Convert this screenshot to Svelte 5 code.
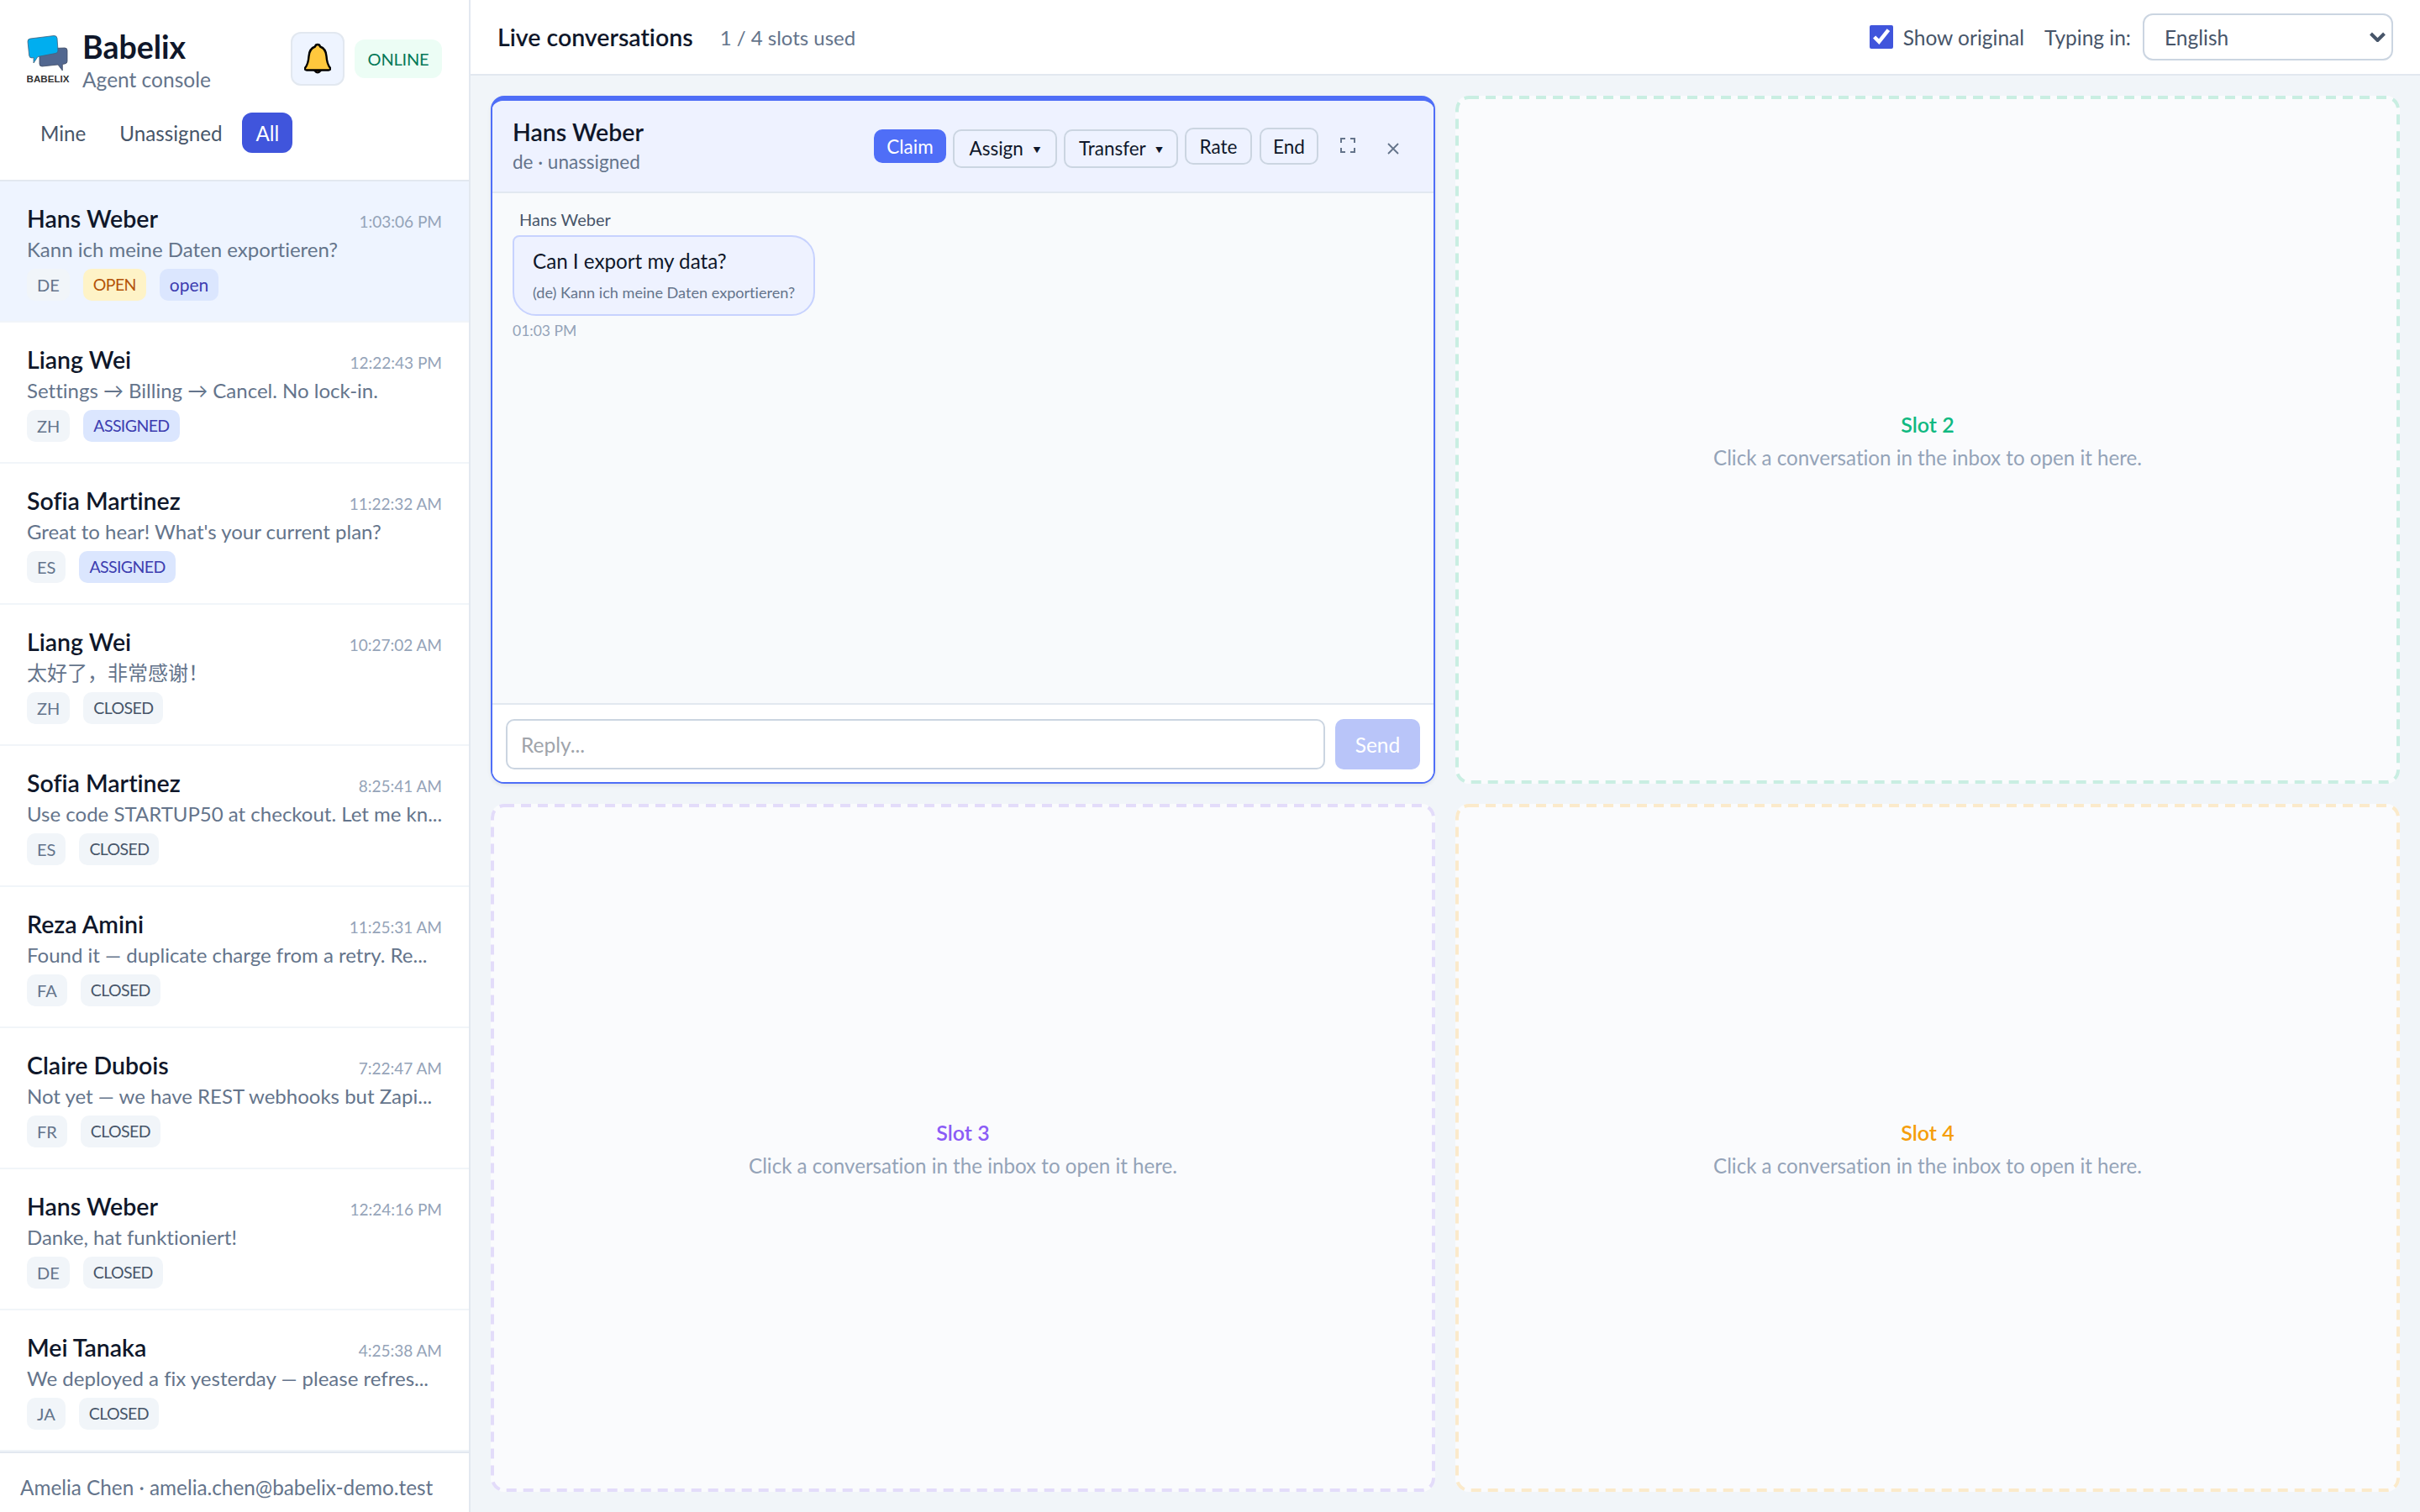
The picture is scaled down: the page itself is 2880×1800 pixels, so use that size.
<script>
  const items = [
    { name: 'Hans Weber', time: '1:03:06 PM', text: 'Kann ich meine Daten exportieren?', lang: 'DE', status: 'OPEN', extra: 'open', active: true },
    { name: 'Liang Wei', time: '12:22:43 PM', text: 'Settings → Billing → Cancel. No lock-in.', lang: 'ZH', status: 'ASSIGNED' },
    { name: 'Sofia Martinez', time: '11:22:32 AM', text: "Great to hear! What's your current plan?", lang: 'ES', status: 'ASSIGNED' },
    { name: 'Liang Wei', time: '10:27:02 AM', text: '太好了，非常感谢！', lang: 'ZH', status: 'CLOSED' },
    { name: 'Sofia Martinez', time: '8:25:41 AM', text: 'Use code STARTUP50 at checkout. Let me kn...', lang: 'ES', status: 'CLOSED' },
    { name: 'Reza Amini', time: '11:25:31 AM', text: 'Found it — duplicate charge from a retry. Re...', lang: 'FA', status: 'CLOSED' },
    { name: 'Claire Dubois', time: '7:22:47 AM', text: 'Not yet — we have REST webhooks but Zapi...', lang: 'FR', status: 'CLOSED' },
    { name: 'Hans Weber', time: '12:24:16 PM', text: 'Danke, hat funktioniert!', lang: 'DE', status: 'CLOSED' },
    { name: 'Mei Tanaka', time: '4:25:38 AM', text: 'We deployed a fix yesterday — please refres...', lang: 'JA', status: 'CLOSED' }
  ]

  const slots = [
    { label: 'Slot 2', tone: 'green' },
    { label: 'Slot 3', tone: 'purple' },
    { label: 'Slot 4', tone: 'amber' }
  ]

  let showOriginal = true
</script>

<div class="app">
  <aside class="sidebar">
    <div class="side-head">
      <div class="brand-row">
        <svg class="logo" viewBox="0 0 52 60" width="52" height="60" aria-hidden="true">
          <path d="M18 16 L45 15 Q48 15 48 18 L48 31 Q48 33.500 45 34 L42.300 34.500 L42.300 42 L37 35 L18 37 Q15 37 15 34 L15 19 Q15 16 18 16Z" fill="#52678f" stroke="#3d4a63" stroke-width="0.8" />
          <path d="M4 4 L32 0.500 Q35.500 0.200 36 3.500 L37 18 Q37.300 21 34 21.500 L13 25.500 L8 33 L8 26.500 L6 27 Q3 27.200 2.700 24 L1 7.500 Q0.800 4.400 4 4Z" fill="#00aeef" stroke="#45607a" stroke-width="0.8" />
          <text x="25" y="56" text-anchor="middle" class="logo-word">BABELIX</text>
        </svg>
        <div class="brand">
          <div class="brand-name">Babelix</div>
          <div class="brand-sub">Agent console</div>
        </div>
        <button class="bell" aria-label="Notifications">
          <svg viewBox="0 0 32 38" width="32" height="38" aria-hidden="true">
            <path d="M12 33 Q16 38 20 33Z" fill="#a9622a" stroke="#000" stroke-width="2" />
            <path d="M16 2 Q18.500 2 19 4.500 Q26 7 26.500 16 Q27 25 31 30 Q31.500 32.500 29 32.500 L3 32.500 Q0.500 32.500 1 30 Q5 25 5.500 16 Q6 7 13 4.500 Q13.500 2 16 2Z" fill="#ffc83d" stroke="#000" stroke-width="2.400" stroke-linejoin="round" />
          </svg>
        </button>
        <span class="online">ONLINE</span>
      </div>
      <div class="tabs">
        <button class="tab">Mine</button>
        <button class="tab">Unassigned</button>
        <button class="tab current">All</button>
      </div>
    </div>

    <div class="list">
      {#each items as item}
        <div class="item" class:active={item.active}>
          <div class="item-top">
            <span class="item-name">{item.name}</span>
            <span class="item-time">{item.time}</span>
          </div>
          <div class="item-text">{item.text}</div>
          <div class="tags">
            <span class="tag lang">{item.lang}</span>
            <span class="tag {item.status.toLowerCase()}">{item.status}</span>
            {#if item.extra}
              <span class="tag extra">{item.extra}</span>
            {/if}
          </div>
        </div>
      {/each}
    </div>

    <div class="side-foot">Amelia Chen · amelia.chen@babelix-demo.test</div>
  </aside>

  <main class="main">
    <header class="topbar">
      <h1>Live conversations</h1>
      <span class="used">1 / 4 slots used</span>
      <div class="top-right">
        <label class="check"><input type="checkbox" bind:checked={showOriginal} /> Show original</label>
        <span class="typing">Typing in:</span>
        <select class="lang-select">
          <option>English</option>
          <option>Deutsch</option>
        </select>
      </div>
    </header>

    <div class="grid">
      <section class="card">
        <div class="card-head">
          <div class="who">
            <div class="who-name">Hans Weber</div>
            <div class="who-sub">de · unassigned</div>
          </div>
          <div class="actions">
            <button class="btn primary">Claim</button>
            <button class="btn menu assign">Assign <i class="caret">▼</i></button>
            <button class="btn menu transfer">Transfer <i class="caret">▼</i></button>
            <button class="btn plain rate">Rate</button>
            <button class="btn plain end">End</button>
            <button class="icon-btn expand" aria-label="Expand">
              <svg viewBox="0 0 18 18" width="18" height="18" fill="none" stroke="#64748b" stroke-width="2"><path d="M1 6V1H6M12 1H17V6M17 12V17H12M6 17H1V12" /></svg>
            </button>
            <button class="icon-btn close" aria-label="Close">
              <svg viewBox="0 0 14 14" width="14" height="14" fill="none" stroke="#64748b" stroke-width="1.800"><path d="M1 1L13 13M13 1L1 13" /></svg>
            </button>
          </div>
        </div>

        <div class="messages">
          <div class="sender">Hans Weber</div>
          <div class="bubble">
            <div class="bubble-main">Can I export my data?</div>
            <div class="bubble-orig">(de) Kann ich meine Daten exportieren?</div>
          </div>
          <div class="stamp">01:03 PM</div>
        </div>

        <div class="composer">
          <input class="reply" placeholder="Reply..." />
          <button class="send" disabled>Send</button>
        </div>
      </section>

      {#each slots as slot}
        <section class="slot {slot.tone}">
          <svg class="dashes" width="1124" height="819" aria-hidden="true">
            <rect x="2" y="2" width="1120" height="815" rx="14" />
          </svg>
          <div class="slot-name">{slot.label}</div>
          <div class="slot-hint">Click a conversation in the inbox to open it here.</div>
        </section>
      {/each}
    </div>
  </main>
</div>

<style>
  :global(body) {
    margin: 0;
    background: #f1f5f9;
    font-family: Lato, "Noto Sans CJK SC", sans-serif;
    font-variant-ligatures: none;
    color: #0f172a;
  }
  button,
  input,
  select {
    font: inherit;
    font-variant-ligatures: none;
  }
  .app {
    display: grid;
    grid-template-columns: 560px 1fr;
    height: 1800px;
    overflow: hidden;
  }
  .sidebar {
    display: flex;
    flex-direction: column;
    background: #fff;
    border-right: 2px solid #e2e8f0;
    min-width: 0;
  }
  .side-head {
    height: 216px;
    box-sizing: border-box;
    padding: 38px 32px 0;
    border-bottom: 2px solid #e2e8f0;
  }
  .brand-row {
    display: flex;
    align-items: center;
    height: 64px;
  }
  .logo {
    flex: none;
    margin: 4px 14px 0 0;
  }
  .logo-word {
    font-family: "Liberation Sans", sans-serif;
    font-weight: 700;
    font-size: 11.6px;
    fill: #333;
  }
  .brand {
    flex: 1;
    min-width: 0;
    padding-top: 4px;
  }
  .brand-name {
    font-size: 37.5px;
    font-weight: 700;
    line-height: 45px;
  }
  .brand-sub {
    font-size: 24.5px;
    line-height: 34px;
    color: #64748b;
  }
  .bell {
    width: 64px;
    height: 64px;
    display: flex;
    align-items: center;
    justify-content: center;
    padding: 0;
    border: 2px solid #e2e8f0;
    border-radius: 12px;
    background: #eef4ff;
  }
  .online {
    margin-left: 12px;
    width: 104px;
    height: 46px;
    line-height: 46px;
    text-align: center;
    border-radius: 12px;
    background: #ecfdf5;
    color: #047857;
    font-size: 20px;
    letter-spacing: -0.2px;
  }
  .tabs {
    display: flex;
    gap: 8px;
    margin-top: 32px;
  }
  .tab {
    height: 48px;
    padding: 0 16px;
    border: 0;
    border-radius: 12px;
    background: transparent;
    color: #475569;
    font-size: 24.2px;
  }
  .tab.current {
    background: #4055dc;
    color: #fff;
  }
  .list {
    flex: 1;
    min-height: 0;
  }
  .item {
    height: 168px;
    box-sizing: border-box;
    padding: 24px 32px 0;
    border-bottom: 2px solid #f1f5f9;
  }
  .item.active {
    background: #eef4ff;
  }
  .item-top {
    display: flex;
    justify-content: space-between;
    align-items: baseline;
  }
  .item-name {
    font-size: 28.5px;
    font-weight: 600;
    line-height: 40px;
  }
  .item-time {
    font-size: 19px;
    color: #94a3b8;
  }
  .item-text {
    font-size: 24px;
    line-height: 34px;
    color: #64748b;
    white-space: nowrap;
  }
  .tags {
    display: flex;
    gap: 16px;
    margin-top: 6px;
  }
  .tag {
    height: 38px;
    line-height: 38px;
    padding: 0 12px;
    border-radius: 10px;
    font-size: 19.5px;
    letter-spacing: -0.6px;
    background: #f1f5f9;
    color: #475569;
  }
  .tag.lang {
    font-size: 20px;
    letter-spacing: 0;
    color: #64748b;
  }
  .tag.open {
    background: #fef3c7;
    color: #b45309;
  }
  .tag.assigned,
  .tag.extra {
    background: #dbe6fe;
    color: #3d3db0;
  }
  .tag.extra {
    font-size: 21px;
    letter-spacing: 0;
  }
  .side-foot {
    height: 72px;
    box-sizing: border-box;
    border-top: 2px solid #e2e8f0;
    padding: 24px 24px 0;
    font-size: 24.3px;
    line-height: 34px;
    color: #64748b;
    white-space: nowrap;
  }
  .main {
    display: flex;
    flex-direction: column;
    min-width: 0;
  }
  .topbar {
    height: 90px;
    box-sizing: border-box;
    display: flex;
    align-items: center;
    padding: 0 32px;
    background: #fff;
    border-bottom: 2px solid #e2e8f0;
  }
  h1 {
    margin: 0;
    font-size: 28.5px;
    font-weight: 600;
  }
  .used {
    margin-left: 32px;
    font-size: 24px;
    color: #64748b;
  }
  .top-right {
    margin-left: auto;
    display: flex;
    align-items: center;
    font-size: 24.5px;
    color: #475569;
  }
  .check {
    display: flex;
    align-items: center;
    gap: 12px;
  }
  .check input {
    width: 28px;
    height: 28px;
    margin: 0;
    accent-color: #4055dc;
  }
  .typing {
    margin: 0 14px 0 24px;
  }
  .lang-select {
    appearance: none;
    width: 298px;
    height: 56px;
    padding: 0 24px;
    border: 2px solid #cbd5e1;
    border-radius: 12px;
    background: #fff url("data:image/svg+xml,%3Csvg xmlns='http://www.w3.org/2000/svg' width='19' height='12' fill='none' stroke='%23475569' stroke-width='4'%3E%3Cpath d='M1.500 2 9.500 10 17.500 2'/%3E%3C/svg%3E") no-repeat right 7px center;
    color: #475569;
  }
  .grid {
    flex: 1;
    min-height: 0;
    display: grid;
    grid-template-columns: 1fr 1fr;
    grid-template-rows: 1fr 1fr;
    gap: 24px;
    padding: 24px;
  }
  .card {
    display: flex;
    flex-direction: column;
    min-height: 0;
    overflow: hidden;
    background: #fff;
    border: 2px solid #4f6ef7;
    border-top-width: 6px;
    border-radius: 16px;
    box-shadow: 0 2px 4px rgba(15, 23, 42, 0.08);
  }
  .card-head {
    height: 110px;
    box-sizing: border-box;
    display: flex;
    align-items: center;
    justify-content: space-between;
    padding: 0 24px;
    background: #eef2ff;
    border-bottom: 2px solid #e2e8f0;
    flex: none;
  }
  .who {
    margin-top: -2px;
  }
  .who-name {
    font-size: 28.5px;
    font-weight: 600;
    line-height: 40px;
  }
  .who-sub {
    font-size: 22.5px;
    line-height: 32px;
    color: #64748b;
  }
  .actions {
    display: flex;
    align-items: center;
  }
  .btn {
    box-sizing: border-box;
    padding: 0;
    border-radius: 10px;
    font-size: 22.5px;
    color: #0f172a;
    background: transparent;
    border: 2px solid #cbd5e1;
    white-space: nowrap;
  }
  .btn.primary {
    width: 86px;
    height: 40px;
    margin-right: 8px;
    border: 0;
    background: #4f6ef7;
    color: #fff;
  }
  .btn.menu {
    height: 46px;
    margin: 5px 8px 0 0;
  }
  .btn.assign {
    width: 124px;
  }
  .btn.transfer {
    width: 136px;
  }
  .btn.plain {
    height: 44px;
    margin-right: 9px;
  }
  .btn.rate {
    width: 80px;
  }
  .btn.end {
    width: 70px;
  }
  .caret {
    font-style: normal;
    font-size: 9px;
    margin-left: 6px;
    vertical-align: 3px;
  }
  .icon-btn {
    display: flex;
    padding: 0;
    border: 0;
    background: none;
  }
  .expand {
    margin: -2px 0 0 17px;
  }
  .close {
    margin: 6px 17px 0 38px;
  }
  .messages {
    flex: 1;
    min-height: 0;
    box-sizing: border-box;
    padding: 16px 24px 0;
    background: #f8fafc;
  }
  .sender {
    margin-left: 8px;
    font-size: 20px;
    line-height: 30px;
    color: #475569;
  }
  .bubble {
    display: inline-block;
    margin-top: 4px;
    padding: 9px 22px 12px;
    border: 2px solid #c7d2fe;
    border-radius: 8px 28px 28px 28px;
    background: #eef2ff;
  }
  .bubble-main {
    font-size: 24.2px;
    line-height: 40px;
  }
  .bubble-orig {
    margin-top: 3px;
    font-size: 18.1px;
    line-height: 28px;
    color: #64748b;
  }
  .stamp {
    margin-top: 4px;
    font-size: 17.5px;
    line-height: 28px;
    color: #94a3b8;
  }
  .composer {
    flex: none;
    display: flex;
    gap: 12px;
    padding: 17px 16px 15px;
    background: #fff;
    border-top: 2px solid #e2e8f0;
  }
  .reply {
    flex: 1;
    min-width: 0;
    box-sizing: border-box;
    height: 60px;
    padding: 0 16px;
    border: 2px solid #cbd5e1;
    border-radius: 10px;
    font-size: 24.5px;
  }
  .reply::placeholder {
    color: #a0a4ab;
  }
  .send {
    width: 101px;
    height: 60px;
    padding: 0;
    border: 0;
    border-radius: 10px;
    background: #b9c5f9;
    color: #fff;
    font-size: 24.5px;
  }
  .slot {
    position: relative;
    display: flex;
    flex-direction: column;
    align-items: center;
    justify-content: center;
    gap: 4px;
    padding-top: 2px;
    box-sizing: border-box;
    border-radius: 16px;
    background: #fafbfd;
    text-align: center;
  }
  .dashes {
    position: absolute;
    inset: 0;
    fill: none;
    stroke: var(--line);
    stroke-width: 4;
    stroke-dasharray: 12 8;
  }
  .slot.green {
    --line: #c9eee2;
    --tone: #10b981;
  }
  .slot.purple {
    --line: #e3dcfa;
    --tone: #8b5cf6;
  }
  .slot.amber {
    --line: #fbeacb;
    --tone: #f59e0b;
  }
  .slot-name {
    font-size: 25px;
    font-weight: 600;
    line-height: 36px;
    color: var(--tone);
  }
  .slot-hint {
    font-size: 24.15px;
    line-height: 36px;
    color: #94a3b8;
  }
</style>
